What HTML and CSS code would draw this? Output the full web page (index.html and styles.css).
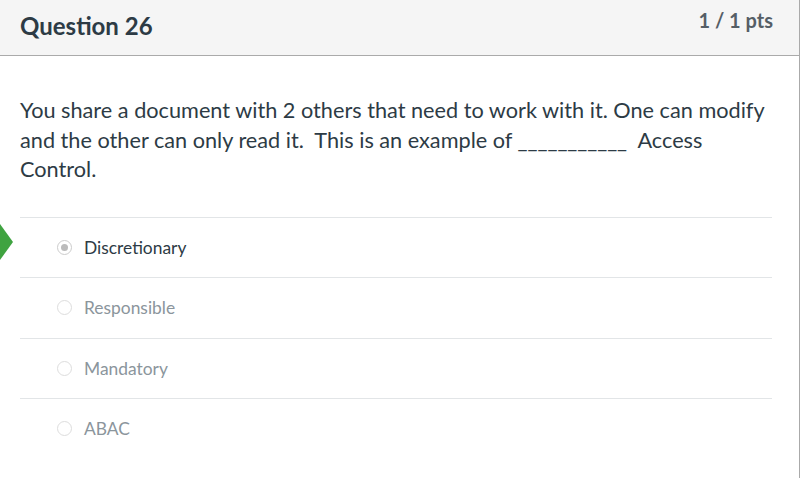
FILE: index.html
```html
<!DOCTYPE html>
<html lang="en">
<head>
    <meta charset="UTF-8">
    <title>Question 26</title>
    <link rel="stylesheet" href="styles.css">
</head>
<body>
    <div class="question">
        <div class="question-header">
            <h2>Question 26</h2>
            <span class="pts">1 / 1 pts</span>
        </div>
        <div class="question-body">
            <p class="question-text">You share a document with 2 others that need to work with it. One can modify and the other can only read it.&nbsp; This is an example of ___________&nbsp; Access Control.</p>
            <div class="answers">
                <div class="answer selected">
                    <span class="correct-arrow"></span>
                    <span class="radio"></span>
                    <span class="label">Discretionary</span>
                </div>
                <div class="answer">
                    <span class="radio"></span>
                    <span class="label">Responsible</span>
                </div>
                <div class="answer">
                    <span class="radio"></span>
                    <span class="label">Mandatory</span>
                </div>
                <div class="answer">
                    <span class="radio"></span>
                    <span class="label">ABAC</span>
                </div>
            </div>
        </div>
    </div>
</body>
</html>
```

FILE: styles.css
```css
body {
    margin: 0;
    font-family: Lato, "Open Sans", sans-serif;
    background-color: #fff;
    color: #2d3b45;
}
.question {
    width: 799px;
    height: 478px;
    border-right: 1px solid #aaa;
    overflow: hidden;
}
.question-header {
    display: flex;
    justify-content: space-between;
    align-items: flex-start;
    height: 55px;
    padding: 0 26px 0 20px;
    background-color: #f5f5f5;
    border-bottom: 1px solid #aaa;
}
.question-header h2 {
    margin: 11px 0 0;
    font-size: 24px;
    line-height: 30px;
    font-weight: 700;
}
.pts {
    margin-top: 7px;
    font-size: 20px;
    line-height: 26px;
    font-weight: 700;
    color: #555e66;
}
.question-body {
    padding: 0 27px 0 20px;
}
.question-text {
    margin: 40px 0 0;
    font-size: 21.7px;
    line-height: 29.5px;
}
.answers {
    margin-top: 32px;
}
.answer {
    position: relative;
    display: flex;
    align-items: center;
    height: 59.5px;
    border-top: 1px solid #e2e5e7;
    padding-left: 37px;
}
.radio {
    width: 15px;
    height: 15px;
    border: 1px solid #ddd;
    border-radius: 50%;
    background-color: #fff;
    box-sizing: border-box;
    margin-right: 12px;
    position: relative;
}
.selected .radio {
    border-color: #ccc;
}
.selected .radio::after {
    content: "";
    position: absolute;
    top: 3px;
    left: 3px;
    width: 7px;
    height: 7px;
    border-radius: 50%;
    background-color: #bbb;
}
.label {
    font-size: 17.4px;
    color: #8b959c;
}
.selected .label {
    color: #2d3b45;
}
.correct-arrow {
    position: absolute;
    left: -20px;
    top: 6px;
    width: 0;
    height: 0;
    border-top: 18px solid transparent;
    border-bottom: 18px solid transparent;
    border-left: 13px solid #3fa340;
}
```
